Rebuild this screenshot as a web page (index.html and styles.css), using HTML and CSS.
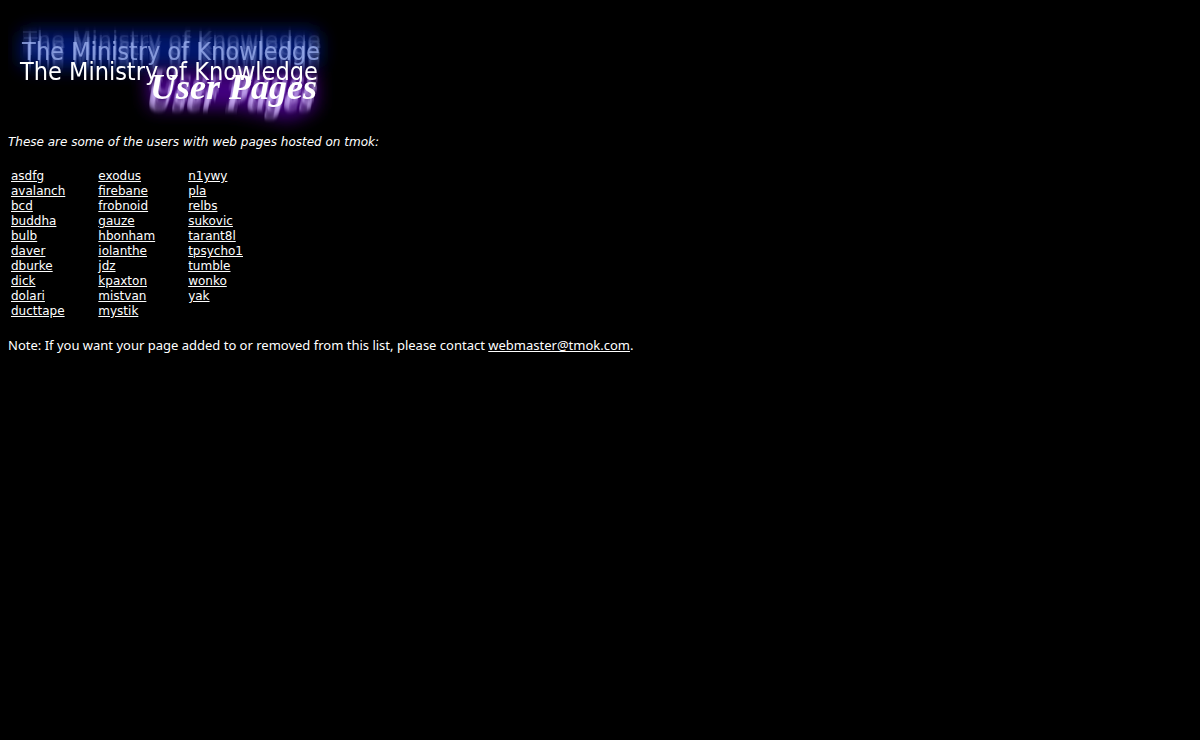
FILE: index.html
```html
<!DOCTYPE html>
<html lang="en">
<head>
    <meta charset="UTF-8">
    <meta name="viewport" content="width=device-width, initial-scale=1.0">
    <title>The Ministry of Knowledge - User Pages</title>
    <link rel="stylesheet" href="styles.css">
</head>
<body>
    <svg class="logo" width="330" height="126" viewBox="0 0 330 126" role="img" aria-label="The Ministry of Knowledge User Pages">
        <defs>
            <filter id="glow" x="-30%" y="-80%" width="160%" height="260%">
                <feGaussianBlur stdDeviation="9"/>
            </filter>

            <!-- blue echoes rising above the title -->
            <filter id="title-echo" filterUnits="userSpaceOnUse" x="0" y="0" width="330" height="126" color-interpolation-filters="sRGB">
                <feColorMatrix in="SourceGraphic" result="blue" values="0 0 0 0 0.62  0 0 0 0 0.7  0 0 0 0 0.95  0 0 0 0.75 0"/>
                <feColorMatrix in="blue" result="faint" values="1 0 0 0 0  0 1 0 0 0  0 0 1 0 0  0 0 0 0.16 0"/>
                <feOffset in="blue" dx="2" dy="-20" result="main"/>
                <feOffset in="faint" dx="4" dy="-25" result="e1"/>
                <feOffset in="faint" dx="3" dy="-31" result="e2"/>
                <feGaussianBlur in="blue" stdDeviation="0 5" result="blurred"/>
                <feColorMatrix in="blurred" result="streak" values="1 0 0 0 0  0 1 0 0 0  0 0 1 0 0  0 0 0 0.7 0"/>
                <feOffset in="streak" dx="3" dy="-26" result="s1"/>
                <feOffset in="streak" dx="3" dy="-15" result="s2"/>
                <feMerge>
                    <feMergeNode in="s1"/>
                    <feMergeNode in="s2"/>
                    <feMergeNode in="e2"/>
                    <feMergeNode in="e1"/>
                    <feMergeNode in="main"/>
                    <feMergeNode in="SourceGraphic"/>
                </feMerge>
            </filter>

            <!-- purple trails falling down to the left of the script -->
            <filter id="script-echo" filterUnits="userSpaceOnUse" x="0" y="0" width="330" height="126" color-interpolation-filters="sRGB">
                <feColorMatrix in="SourceGraphic" result="lilac" values="0 0 0 0 0.84  0 0 0 0 0.74  0 0 0 0 1  0 0 0 0.5 0"/>
                <feGaussianBlur in="lilac" stdDeviation="0 2" result="trail"/>
                <feOffset in="trail" dx="-1" dy="4" result="t1"/>
                <feOffset in="trail" dx="-3" dy="8" result="t2"/>
                <feOffset in="trail" dx="-4" dy="12" result="t3"/>
                <feOffset in="trail" dx="2" dy="-6" result="t4"/>
                <feMerge>
                    <feMergeNode in="t4"/>
                    <feMergeNode in="t3"/>
                    <feMergeNode in="t2"/>
                    <feMergeNode in="t1"/>
                    <feMergeNode in="SourceGraphic"/>
                </feMerge>
            </filter>
        </defs>

        <rect x="12" y="22" width="300" height="38" rx="10" fill="#001f8a" opacity="0.8" filter="url(#glow)"/>
        <path d="M138 64H308V100L282 112L225 100H142Z" fill="#4b0090" opacity="0.9" filter="url(#glow)"/>

        <text class="script" x="142" y="91" filter="url(#script-echo)">User Pages</text>
        <text class="title" x="12" y="72" filter="url(#title-echo)">The Ministry of Knowledge</text>
    </svg>

    <p class="intro"><em>These are some of the users with web pages hosted on tmok:</em></p>

    <table class="users">
        <tr>
            <td>
                <a href="#asdfg">asdfg</a><br>
                <a href="#avalanch">avalanch</a><br>
                <a href="#bcd">bcd</a><br>
                <a href="#buddha">buddha</a><br>
                <a href="#bulb">bulb</a><br>
                <a href="#daver">daver</a><br>
                <a href="#dburke">dburke</a><br>
                <a href="#dick">dick</a><br>
                <a href="#dolari">dolari</a><br>
                <a href="#ducttape">ducttape</a>
            </td>
            <td>
                <a href="#exodus">exodus</a><br>
                <a href="#firebane">firebane</a><br>
                <a href="#frobnoid">frobnoid</a><br>
                <a href="#gauze">gauze</a><br>
                <a href="#hbonham">hbonham</a><br>
                <a href="#iolanthe">iolanthe</a><br>
                <a href="#jdz">jdz</a><br>
                <a href="#kpaxton">kpaxton</a><br>
                <a href="#mistvan">mistvan</a><br>
                <a href="#mystik">mystik</a>
            </td>
            <td>
                <a href="#n1ywy">n1ywy</a><br>
                <a href="#pla">pla</a><br>
                <a href="#relbs">relbs</a><br>
                <a href="#sukovic">sukovic</a><br>
                <a href="#tarant8l">tarant8l</a><br>
                <a href="#tpsycho1">tpsycho1</a><br>
                <a href="#tumble">tumble</a><br>
                <a href="#wonko">wonko</a><br>
                <a href="#yak">yak</a>
            </td>
        </tr>
    </table>

    <p class="note">Note: If you want your page added to or removed from this list, please contact <a href="mailto:webmaster@tmok.com">webmaster@tmok.com</a>.</p>
</body>
</html>
```

FILE: styles.css
```css
body {
    margin: 8px;
    background: #000;
    color: #fff;
    font-family: "DejaVu Sans", sans-serif;
    font-size: 12px;
    line-height: 15px;
}
a {
    color: #fff;
}
.logo {
    display: block;
}
.title {
    font-family: "DejaVu Sans Condensed", "DejaVu Sans", sans-serif;
    font-size: 25px;
    fill: #fff;
}
.script {
    font-family: "Liberation Serif", serif;
    font-size: 36px;
    font-style: italic;
    font-weight: bold;
    fill: #fff;
}
.intro {
    margin: 1px 0 16px;
}
.users {
    border-spacing: 2px;
}
.users td {
    padding: 1px 30px 1px 1px;
    vertical-align: top;
    white-space: nowrap;
}
.note {
    margin: 16px 0;
    font-family: "Noto Sans", sans-serif;
    font-size: 13px;
}
```
